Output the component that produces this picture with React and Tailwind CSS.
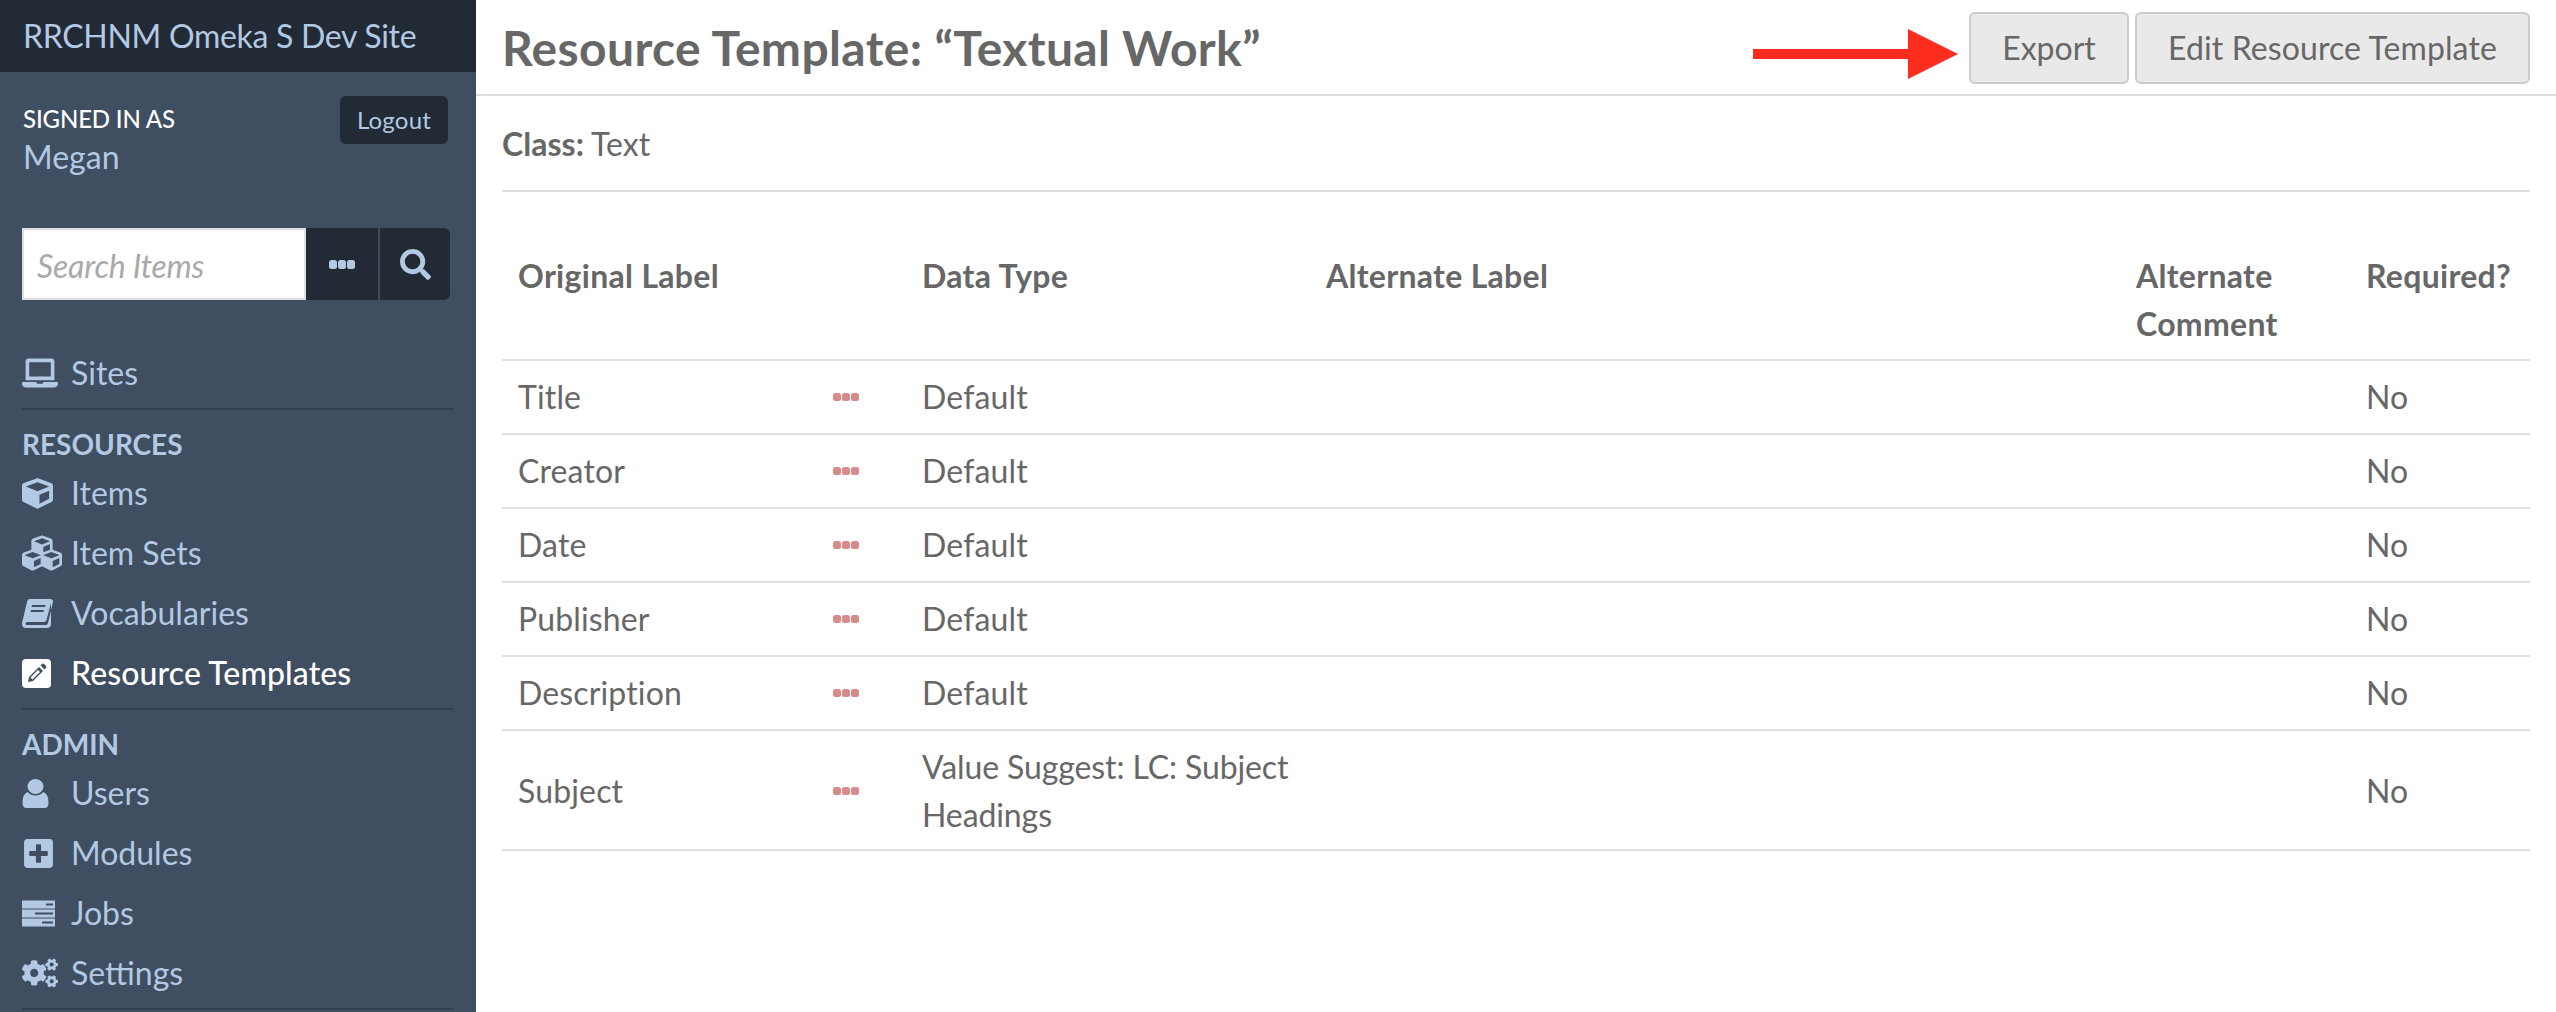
import React from "react";
import { FaLaptop, FaCube, FaCubes, FaPlusSquare, FaCogs, FaSearch } from "react-icons/fa";

const font = { fontFamily: '"Lato", "Open Sans", sans-serif' };

function Dots({ className = "", h = 9 }) {
  return (
    <svg width="26" height={h} viewBox={`0 0 26 ${h}`} className={className} fill="currentColor" aria-hidden="true">
      <rect x="0" y="0" width="8" height={h} rx="2.5" />
      <rect x="9" y="0" width="8" height={h} rx="2.5" />
      <rect x="18" y="0" width="8" height={h} rx="2.5" />
    </svg>
  );
}

function BookIcon({ size }) {
  return (
    <svg width={size} height={size} viewBox="0 0 31 29" fill="currentColor" aria-hidden="true">
      <path fillRule="evenodd" d="M8 0 H28 Q31 0 31 3 L26 24 Q25.5 26 24 26 H5 Q3.5 26 3.5 24.5 Q3.5 23 5 23 H22 Q24 23 24.5 21 L29 4 L29 26 Q28 29 25 29 H4 Q0 29 0 25 Q0 23 1 20 L5 3 Q5.7 0 8 0 Z M10 6 L9.5 8 H23 L23.5 6 Z M9 11 L8.5 13 H21.5 L22 11 Z" />
    </svg>
  );
}

function PencilIcon({ size }) {
  return (
    <svg width={size} height={size} viewBox="0 0 29 29" aria-hidden="true">
      <rect x="0" y="0" width="29" height="29" rx="4" fill="#ffffff" />
      <path d="M7 18 L17 8 L21 12 L11 22 L6 23 Z" fill="#3f4e61" />
      <path d="M18.5 6.5 L20 5 Q21 4.2 22 5 L24 7 Q24.8 8 24 9 L22.5 10.5 Z" fill="#3f4e61" />
      <path d="M8.5 18.5 L16 11 L18 13 L10.5 20.5 Z" fill="#ffffff" />
    </svg>
  );
}

function UserIcon({ size }) {
  return (
    <svg width={size} height={size} viewBox="0 0 26 29" fill="currentColor" aria-hidden="true" className="ml-[-1px]">
      <ellipse cx="13" cy="7.5" rx="8" ry="7.5" />
      <path d="M5 13 Q8.5 16.5 13 16.5 Q17.5 16.5 21 13 Q26 15 26 24 Q26 29 22 29 H4 Q0 29 0 24 Q0 15 5 13 Z" />
    </svg>
  );
}

function TasksIcon({ size }) {
  return (
    <svg width={size} height={size} viewBox="0 0 33 26" fill="currentColor" aria-hidden="true">
      <path fillRule="evenodd" d="M0 0 H33 V8 H0 Z M24 3 V5 H31 V3 Z" />
      <path fillRule="evenodd" d="M0 9 H33 V17 H0 Z M13 12 V14 H31 V12 Z" />
      <path fillRule="evenodd" d="M0 18 H33 V26 H0 Z M20 21 V23 H31 V21 Z" />
    </svg>
  );
}

function NavRow({ icon: Icon, label, active, iconSize = 31 }) {
  return (
    <div className={`flex items-center h-[60px] text-[32px] leading-[48px] ${active ? "text-white font-medium tracking-[0.1px]" : "text-[#b3c9e3]"}`}>
      <span className="w-[49px] flex items-center shrink-0"><Icon size={iconSize} /></span>
      <span>{label}</span>
    </div>
  );
}

function Heading({ children }) {
  return <div className="text-[28px] leading-[36px] font-bold text-[#b3c9e3] pt-[1px] mb-[1px]">{children}</div>;
}

const rows = [
  ["Title", "Default", 74],
  ["Creator", "Default", 74],
  ["Date", "Default", 74],
  ["Publisher", "Default", 74],
  ["Description", "Default", 74],
  ["Subject", "Value Suggest: LC: Subject Headings", 120],
];

const th = "px-[16px] pt-[36px] pb-[11px] font-bold align-top tracking-[0.3px]";

export default function App() {
  return (
    <div className="flex w-[2556px] h-[1012px] overflow-hidden bg-white text-[#676767]" style={font}>
      <aside className="w-[476px] shrink-0 bg-[#3f4e61] flex flex-col">
        <div className="h-[72px] bg-[#222a35] px-[23px] flex items-center text-[32px] text-[#b3c9e3] tracking-[-0.3px] shrink-0">RRCHNM Omeka S Dev Site</div>
        <div className="flex justify-between items-start pt-[24px] pl-[23px] pr-[28px]">
          <div>
            <div className="text-[24px] leading-[32px] mt-[7px] mb-[2px] text-white font-medium tracking-[-0.15px]">SIGNED IN AS</div>
            <div className="text-[32px] leading-[40px] text-[#b3c9e3]">Megan</div>
          </div>
          <div className="w-[108px] h-[48px] bg-[#222a35] rounded-[6px] flex items-center justify-center text-[24px] text-[#b3c9e3] tracking-[0.2px]">Logout</div>
        </div>
        <div className="flex mt-[51px] ml-[22px] mr-[26px] h-[72px]">
          <div className="w-[284px] bg-white border-[2px] border-[#dfdfdf] flex items-center pl-[13px] pt-[3px] text-[32px] italic text-[#a9a9a9] tracking-[-0.2px]">Search Items</div>
          <div className="w-[72px] bg-[#222a35] flex items-center justify-center text-[#b3c9e3]"><Dots /></div>
          <div className="w-[2px] bg-[#3f4e61]" />
          <div className="w-[70px] bg-[#222a35] rounded-r-[6px] flex items-center justify-center text-[#b3c9e3]"><FaSearch size={31} /></div>
        </div>
        <nav className="mx-[22px] mt-[43px] flex flex-col">
          <NavRow icon={FaLaptop} label="Sites" iconSize={36} />
          <div className="border-t-2 border-[#344152] mt-[5px] mb-[15px]" />
          <Heading>RESOURCES</Heading>
          <NavRow icon={FaCube} label="Items" />
          <NavRow icon={FaCubes} label="Item Sets" iconSize={40} />
          <NavRow icon={BookIcon} label="Vocabularies" />
          <NavRow icon={PencilIcon} label="Resource Templates" iconSize={29} active />
          <div className="border-t-2 border-[#344152] mt-[5px] mb-[15px]" />
          <Heading>ADMIN</Heading>
          <NavRow icon={UserIcon} label="Users" iconSize={29} />
          <NavRow icon={FaPlusSquare} label="Modules" iconSize={33} />
          <NavRow icon={TasksIcon} label="Jobs" iconSize={33} />
          <NavRow icon={FaCogs} label="Settings" iconSize={36} />
          <div className="border-t-2 border-[#344152] mt-[5px]" />
        </nav>
      </aside>
      <main className="flex-1 min-w-0">
        <header className="h-[96px] border-b-2 border-[#dfdfdf] flex items-start justify-between pl-[26px] pr-[26px]">
          <h1 className="text-[48px] font-bold tracking-[0.35px] leading-[48px] mt-[24px]">Resource Template: “Textual Work”</h1>
          <div className="flex items-start pt-[12px]">
            <svg width="205" height="50" viewBox="0 0 205 50" className="mr-[11px] mt-[17px]" aria-hidden="true">
              <path d="M0 20 H155 V0 L205 25 L155 50 V30 H0 Z" fill="#fc2d1e" />
            </svg>
            <div className="w-[160px] h-[72px] bg-[#e9e9e9] border-2 border-[#cbcbcb] rounded-[6px] flex items-center justify-center text-[32px]">Export</div>
            <div className="w-[395px] h-[72px] ml-[6px] bg-[#e9e9e9] border-2 border-[#cbcbcb] rounded-[6px] flex items-center justify-center text-[32px] tracking-[0.1px]">Edit Resource Template</div>
          </div>
        </header>
        <div className="mx-[26px]">
          <div className="h-[96px] border-b-2 border-[#dfdfdf] flex items-center pt-[2px] text-[32px] tracking-[0.05px]">
            <span className="font-bold mr-[7px]">Class:</span> Text
          </div>
          <table className="w-[2028px] mt-[24px] table-fixed border-collapse text-[32px] leading-[48px] tracking-[0.15px]">
            <colgroup>
              <col className="w-[404px]" />
              <col className="w-[404px]" />
              <col className="w-[810px]" />
              <col className="w-[230px]" />
              <col className="w-[180px]" />
            </colgroup>
            <thead>
              <tr className="border-b-2 border-[#dfdfdf] text-left">
                <th className={th}>Original Label</th>
                <th className={th}>Data Type</th>
                <th className={th}>Alternate Label</th>
                <th className={th}>Alternate Comment</th>
                <th className={th}>Required?</th>
              </tr>
            </thead>
            <tbody>
              {rows.map(([name, type, h]) => (
                <tr key={name} className="border-b-2 border-[#dfdfdf]" style={{ height: h }}>
                  <td className={`px-[16px] align-middle ${h > 74 ? "pt-[2px]" : ""}`}>
                    <div className="flex items-center justify-between pr-[31px]">
                      <span>{name}</span>
                      <Dots h={8} className="text-[#d98a8a]" />
                    </div>
                  </td>
                  <td className={`pl-[16px] pr-0 align-middle ${h > 74 ? "tracking-[-0.1px] pt-[2px]" : ""}`}>{type}</td>
                  <td className="px-[16px]" />
                  <td className="px-[16px]" />
                  <td className={`px-[16px] align-middle ${h > 74 ? "pt-[2px]" : ""}`}>No</td>
                </tr>
              ))}
            </tbody>
          </table>
        </div>
      </main>
    </div>
  );
}
